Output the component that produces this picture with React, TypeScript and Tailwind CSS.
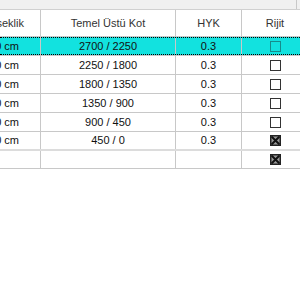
import React from "react";

const rows = [
  { a: "450 cm", b: "2700 / 2250", c: "0.3", r: false, sel: true },
  { a: "450 cm", b: "2250 / 1800", c: "0.3", r: false },
  { a: "450 cm", b: "1800 / 1350", c: "0.3", r: false },
  { a: "450 cm", b: "1350 / 900", c: "0.3", r: false },
  { a: "450 cm", b: "900 / 450", c: "0.3", r: false },
  { a: "450 cm", b: "450 / 0", c: "0.3", r: true },
];

function Box({ checked, sel }: { checked: boolean; sel?: boolean }) {
  if (checked) {
    return (
      <svg width="11" height="11" viewBox="0 0 11 11" className="block">
        <rect x="0.5" y="0.5" width="10" height="10" fill="#9a9a9a" stroke="#222" />
        <path d="M1.5 1.5 L9.5 9.5 M9.5 1.5 L1.5 9.5" stroke="#111" strokeWidth="2" />
        <rect x="1" y="1" width="9" height="9" fill="none" stroke="#222" strokeWidth="1" />
      </svg>
    );
  }
  return (
    <svg width="11" height="11" viewBox="0 0 11 11" className="block">
      <rect x="0.5" y="0.5" width="10" height="10" fill="none" stroke={sel ? "#168c8c" : "#333"} />
    </svg>
  );
}

export default function App() {
  return (
    <div
      className="w-[300px] h-[300px] bg-white overflow-hidden relative text-[11px] text-[#111]"
      style={{ fontFamily: '"Liberation Sans", Arial, sans-serif' }}
    >
      <div className="h-[10px] bg-[#f0f0f0] border-b border-[#d0d0d0] relative">
        <div className="absolute left-[296px] top-0 h-[9px] w-px bg-[#c8c8c8]" />
      </div>
      <div className="flex h-[27px] border-b border-[#c8c8c8] text-[#333]">
        <div className="w-[41px] shrink-0 border-r border-[#c8c8c8] flex items-center justify-end pr-[16px] overflow-visible whitespace-nowrap">
          Yükseklik
        </div>
        <div className="w-[135px] shrink-0 border-r border-[#c8c8c8] flex items-center justify-center">Temel Üstü Kot</div>
        <div className="w-[66px] shrink-0 border-r border-[#c8c8c8] flex items-center justify-center">HYK</div>
        <div className="w-[66px] shrink-0 flex items-center justify-center">Rijit</div>
      </div>
      {rows.map((r, i) => (
        <div
          key={i}
          className={
            "flex h-[19px] relative " +
            (r.sel ? "bg-[#12e2df] border-b border-[#c8c8c8]" : "border-b border-[#c8c8c8]") +
            (i === rows.length - 1 ? " border-b-2 border-b-[#dcdcdc]" : "")
          }
        >
          {r.sel && (
            <>
              <div className="absolute left-0 right-0 top-0 border-t border-dotted border-black" />
              <div className="absolute left-0 right-0 bottom-0 border-b border-dotted border-black" />
            </>
          )}
          <div className="w-[41px] shrink-0 border-r border-[#c8c8c8] flex items-center justify-end pr-[21px] whitespace-nowrap">
            {r.a}
          </div>
          <div className="w-[135px] shrink-0 border-r border-[#c8c8c8] flex items-center justify-center">{r.b}</div>
          <div className="w-[66px] shrink-0 border-r border-[#c8c8c8] flex items-center justify-center">{r.c}</div>
          <div className="w-[66px] shrink-0 flex items-center justify-center">
            <Box checked={r.r} sel={r.sel} />
          </div>
        </div>
      ))}
      <div className="flex h-[18px] border-b border-[#c8c8c8]">
        <div className="w-[41px] shrink-0 border-r border-[#c8c8c8]" />
        <div className="w-[135px] shrink-0 border-r border-[#c8c8c8]" />
        <div className="w-[66px] shrink-0 border-r border-[#c8c8c8]" />
        <div className="w-[66px] shrink-0 flex items-center justify-center">
          <Box checked={true} />
        </div>
      </div>
    </div>
  );
}
